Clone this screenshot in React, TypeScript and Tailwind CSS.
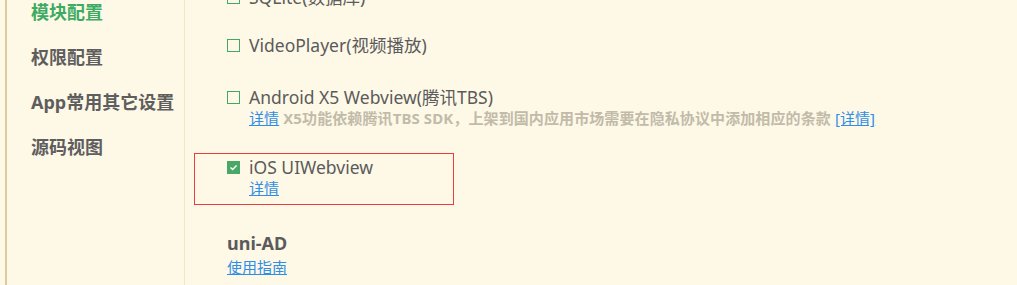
import React from "react";

const font = { fontFamily: '"Noto Sans", "Noto Sans CJK SC", sans-serif' };

function Box({ checked }: { checked?: boolean }) {
  if (checked) {
    return (
      <span className="flex h-[13px] w-[13px] shrink-0 items-center justify-center bg-[#4aa866]">
        <svg width="9" height="9" viewBox="0 0 9 9">
          <path d="M1.5 4.6 L3.6 6.6 L7.6 2.4" fill="none" stroke="#fff" strokeWidth="1.4" />
        </svg>
      </span>
    );
  }
  return <span className="h-[13px] w-[13px] shrink-0 border border-solid border-[#45a862] bg-transparent" />;
}

function Row({ label, checked }: { label: string; checked?: boolean }) {
  return (
    <div className="flex items-center gap-[9px] text-[17.5px] leading-[22px] text-[#5b5b5b]">
      <Box checked={checked} />
      <span>{label}</span>
    </div>
  );
}

export default function App() {
  return (
    <div className="flex h-[285px] w-[1017px] overflow-hidden bg-[#fef8e7]" style={font}>
      <div className="ml-[5px] flex w-[180px] shrink-0 flex-col gap-[23px] border-l-2 border-r border-l-[#dccb9e] border-r-[#f0e6cc] pl-[24px] pt-[1px] text-[18px] font-bold leading-[22px] text-[#5e5e5e]">
        <div className="text-[#3dab62]">模块配置</div>
        <div>权限配置</div>
        <div>App常用其它设置</div>
        <div>源码视图</div>
      </div>
      <div className="flex flex-col pl-[9px]">
        <div className="-mt-[14px] pl-[33px]">
          <Row label="SQLite(数据库)" />
        </div>
        <div className="mt-[26px] pl-[33px]">
          <Row label="VideoPlayer(视频播放)" />
        </div>
        <div className="mt-[30px] pl-[33px]">
          <Row label="Android X5 Webview(腾讯TBS)" />
          <div className="pl-[22px] text-[15px] leading-[20px] tracking-[0.1px]">
            <a className="text-[#2f8ee8] underline">详情</a>{" "}
            <span className="font-bold text-[#c2bba9]">X5功能依赖腾讯TBS SDK，上架到国内应用市场需要在隐私协议中添加相应的条款</span>{" "}
            <a className="text-[#2f8ee8] underline">[详情]</a>
          </div>
        </div>
        <div className="mt-[25px] w-[260px] border border-[#ef3b3b] pb-[6px] pl-[32px] pt-[2px]">
          <Row label="iOS UIWebview" checked />
          <div className="pl-[22px] text-[15px] leading-[20px]">
            <a className="text-[#2f8ee8] underline">详情</a>
          </div>
        </div>
        <div className="mt-[26px] pl-[33px]">
          <div className="text-[18px] font-bold leading-[24px] text-[#5b5b5b]">uni-AD</div>
          <a className="text-[15px] leading-[20px] text-[#2f8ee8] underline">使用指南</a>
        </div>
      </div>
    </div>
  );
}
